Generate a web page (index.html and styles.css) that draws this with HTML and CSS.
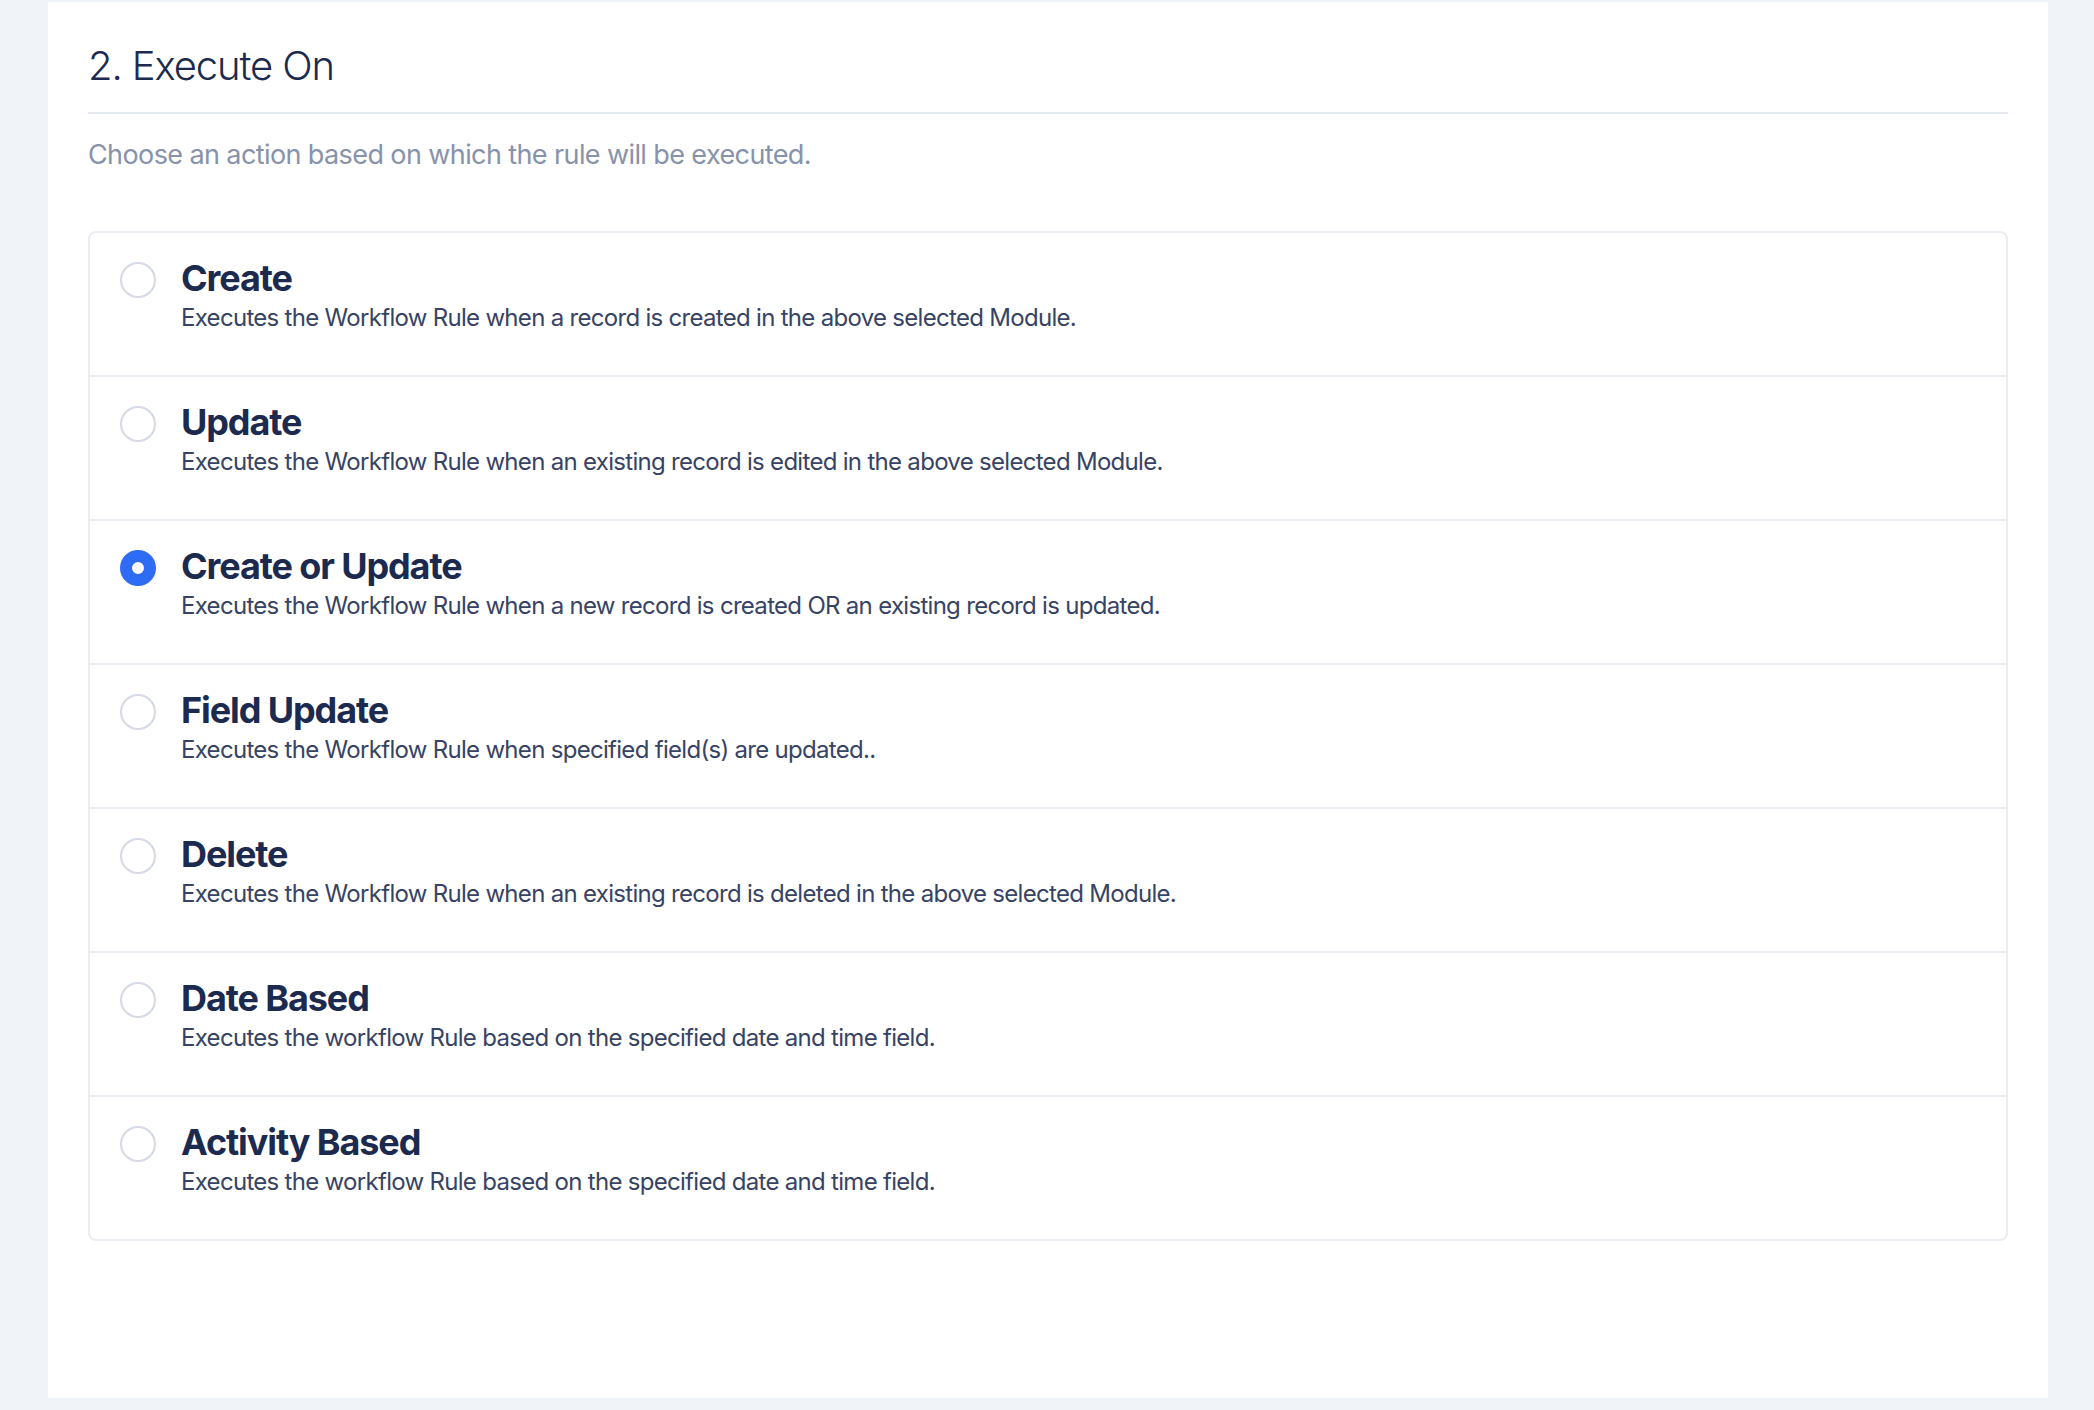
FILE: index.html
```html
<!DOCTYPE html>
<html lang="en">
<head>
    <meta charset="UTF-8">
    <meta name="viewport" content="width=device-width, initial-scale=1.0">
    <title>Execute On</title>
    <link rel="stylesheet" href="styles.css">
</head>
<body>

    <div class="panel">
        <h2 class="step-title">2. Execute On</h2>
        <p class="step-hint">Choose an action based on which the rule will be executed.</p>

        <div class="option-list">
            <label class="option">
                <input type="radio" name="executeOn" value="create">
                <span class="option-text">
                    <span class="option-name">Create</span>
                    <span class="option-desc">Executes the Workflow Rule when a record is created in the above selected Module.</span>
                </span>
            </label>
            <label class="option">
                <input type="radio" name="executeOn" value="update">
                <span class="option-text">
                    <span class="option-name">Update</span>
                    <span class="option-desc">Executes the Workflow Rule when an existing record is edited in the above selected Module.</span>
                </span>
            </label>
            <label class="option">
                <input type="radio" name="executeOn" value="createOrUpdate" checked>
                <span class="option-text">
                    <span class="option-name">Create or Update</span>
                    <span class="option-desc">Executes the Workflow Rule when a new record is created OR an existing record is updated.</span>
                </span>
            </label>
            <label class="option">
                <input type="radio" name="executeOn" value="fieldUpdate">
                <span class="option-text">
                    <span class="option-name">Field Update</span>
                    <span class="option-desc">Executes the Workflow Rule when specified field(s) are updated..</span>
                </span>
            </label>
            <label class="option">
                <input type="radio" name="executeOn" value="delete">
                <span class="option-text">
                    <span class="option-name">Delete</span>
                    <span class="option-desc">Executes the Workflow Rule when an existing record is deleted in the above selected Module.</span>
                </span>
            </label>
            <label class="option">
                <input type="radio" name="executeOn" value="dateBased">
                <span class="option-text">
                    <span class="option-name">Date Based</span>
                    <span class="option-desc">Executes the workflow Rule based on the specified date and time field.</span>
                </span>
            </label>
            <label class="option">
                <input type="radio" name="executeOn" value="activityBased">
                <span class="option-text">
                    <span class="option-name">Activity Based</span>
                    <span class="option-desc">Executes the workflow Rule based on the specified date and time field.</span>
                </span>
            </label>
        </div>
    </div>

</body>
</html>
```

FILE: styles.css
```css
html, body {
    height: 100%;
}
body {
    font-family: Inter, "Noto Sans", Arial, sans-serif;
    margin: 0;
    background: #f0f4f9;
    overflow: hidden;
}
.panel {
    margin: 2px 46px 0 48px;
    padding: 40px 40px 157px;
    background: #ffffff;
}
.step-title {
    margin: 0;
    padding-bottom: 22px;
    border-bottom: 2px solid #e3e8ee;
    font-size: 40px;
    line-height: 48px;
    font-weight: 300;
    letter-spacing: -1.1px;
    color: #1b2a4e;
}
.step-hint {
    margin: 23px 0 58px;
    font-size: 27px;
    line-height: 36px;
    letter-spacing: -0.6px;
    color: #8792ab;
}
.option-list {
    border: 2px solid #ececf3;
    border-radius: 8px;
}
.option {
    display: flex;
    align-items: flex-start;
    gap: 25px;
    padding: 22px 30px 41px;
    border-top: 2px solid #ececf3;
    cursor: pointer;
}
.option:first-child {
    border-top: none;
}
.option input {
    appearance: none;
    -webkit-appearance: none;
    flex: none;
    width: 36px;
    height: 36px;
    margin: 7px 0 0;
    border: 2px solid #d5d9e6;
    border-radius: 50%;
    background: #ffffff;
    cursor: pointer;
}
.option input:checked {
    border: 12px solid #2e6cf5;
}
.option-text {
    display: flex;
    flex-direction: column;
}
.option-name {
    font-size: 36px;
    line-height: 46px;
    font-weight: 700;
    letter-spacing: -1.1px;
    color: #1b2a4e;
}
.option-desc {
    margin-top: 1px;
    font-size: 24px;
    line-height: 32px;
    letter-spacing: -0.7px;
    color: #374364;
}
```
